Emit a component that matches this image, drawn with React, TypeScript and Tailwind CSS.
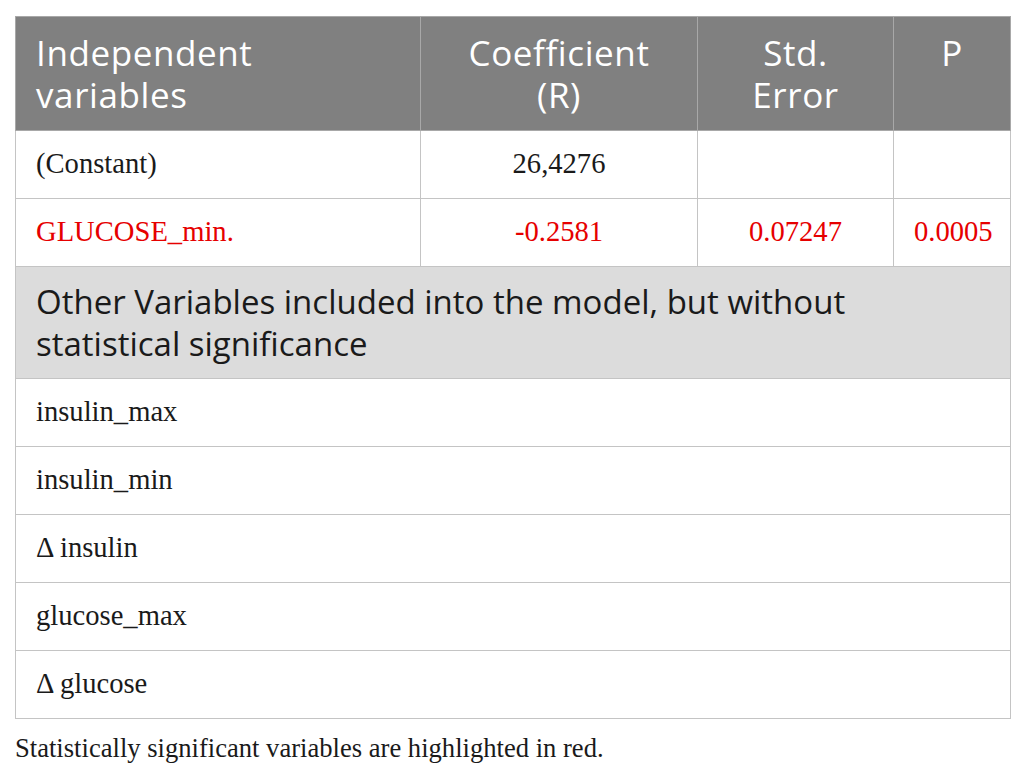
export default function App() {
  const others = ["insulin_max", "insulin_min", "\u0394 insulin", "glucose_max", "\u0394 glucose"]
  const cell = "border border-[#c4c4c4] h-[68px] px-[20px] align-middle"
  const head = "border border-[#a8a8a8] px-[20px] pt-[15px] align-top font-normal"

  return (
    <div className="min-h-screen bg-white pt-[16px] pl-[15px] pr-[15px]">
      <table
        className="w-[995px] border-collapse table-fixed text-[28.6px] text-[#1a1a1a]"
        style={{ fontFamily: '"Liberation Serif", serif' }}
      >
        <colgroup>
          <col className="w-[405px]" />
          <col className="w-[277px]" />
          <col className="w-[196px]" />
          <col className="w-[117px]" />
        </colgroup>
        <thead>
          <tr
            className="bg-[#808080] text-white text-[35px] tracking-[0.6px] leading-[42px] h-[114px]"
            style={{ fontFamily: '"Open Sans", sans-serif' }}
          >
            <th className={`${head} text-left`}>
              Independent
              <br />
              variables
            </th>
            <th className={`${head} text-center`}>
              Coefficient
              <br />
              (R)
            </th>
            <th className={`${head} text-center`}>
              Std.
              <br />
              Error
            </th>
            <th className={`${head} text-center`}>P</th>
          </tr>
        </thead>
        <tbody>
          <tr>
            <td className={cell}>(Constant)</td>
            <td className={`${cell} text-center`}>26,4276</td>
            <td className={cell}></td>
            <td className={cell}></td>
          </tr>
          <tr className="text-[#e60000]">
            <td className={cell}>GLUCOSE_min.</td>
            <td className={`${cell} text-center`}>-0.2581</td>
            <td className={`${cell} text-center`}>0.07247</td>
            <td className={`${cell} text-center`}>0.0005</td>
          </tr>
          <tr>
            <td
              colSpan={4}
              className="border border-[#c4c4c4] bg-[#dcdcdc] h-[112px] px-[20px] text-[33px] leading-[42px] align-middle"
              style={{ fontFamily: '"Open Sans", sans-serif' }}
            >
              Other Variables included into the model, but without
              <br />
              statistical significance
            </td>
          </tr>
          {others.map((name) => (
            <tr key={name}>
              <td colSpan={4} className={cell}>
                {name}
              </td>
            </tr>
          ))}
        </tbody>
      </table>
      <p
        className="mt-[14px] text-[26.6px] leading-[30px] text-[#1a1a1a]"
        style={{ fontFamily: '"Liberation Serif", serif' }}
      >
        Statistically significant variables are highlighted in red.
      </p>
    </div>
  )
}
